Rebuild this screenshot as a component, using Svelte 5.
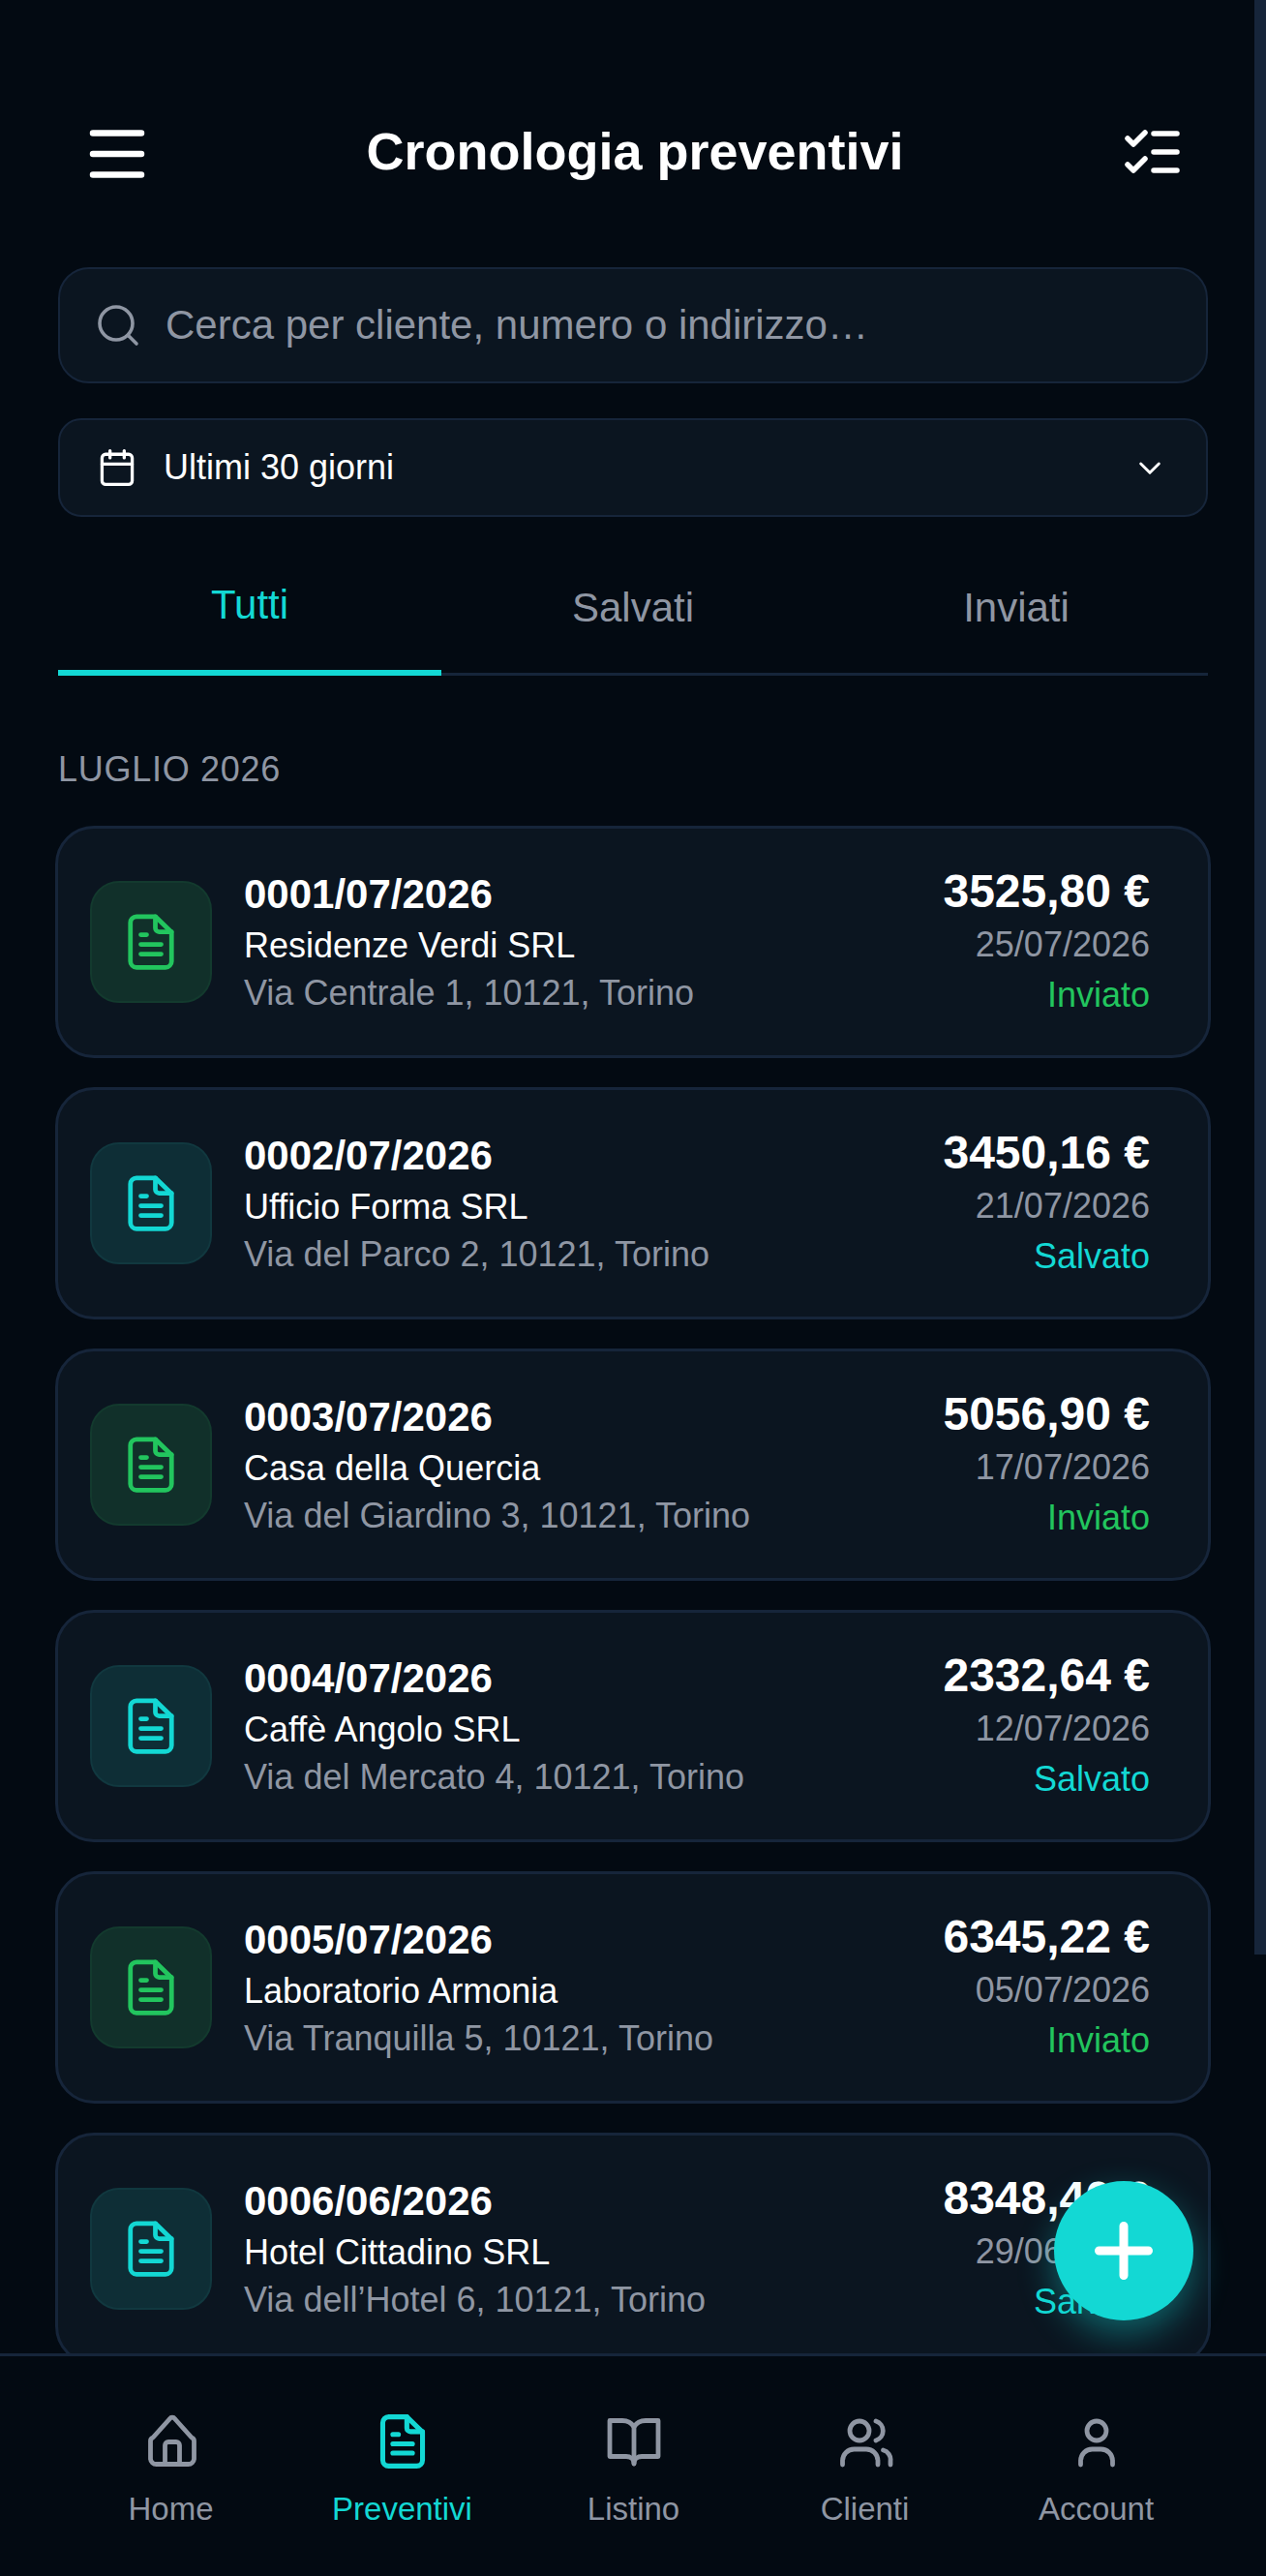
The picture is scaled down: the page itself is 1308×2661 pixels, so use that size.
<script>
  const quotes = [
    { num: '0001/07/2026', client: 'Residenze Verdi SRL', addr: 'Via Centrale 1, 10121, Torino', total: '3525,80 €', date: '25/07/2026', status: 'Inviato' },
    { num: '0002/07/2026', client: 'Ufficio Forma SRL', addr: 'Via del Parco 2, 10121, Torino', total: '3450,16 €', date: '21/07/2026', status: 'Salvato' },
    { num: '0003/07/2026', client: 'Casa della Quercia', addr: 'Via del Giardino 3, 10121, Torino', total: '5056,90 €', date: '17/07/2026', status: 'Inviato' },
    { num: '0004/07/2026', client: 'Caffè Angolo SRL', addr: 'Via del Mercato 4, 10121, Torino', total: '2332,64 €', date: '12/07/2026', status: 'Salvato' },
    { num: '0005/07/2026', client: 'Laboratorio Armonia', addr: 'Via Tranquilla 5, 10121, Torino', total: '6345,22 €', date: '05/07/2026', status: 'Inviato' },
    { num: '0006/06/2026', client: 'Hotel Cittadino SRL', addr: 'Via dell’Hotel 6, 10121, Torino', total: '8348,40 €', date: '29/06/2026', status: 'Salvato' }
  ];

  const tabs = ['Tutti', 'Salvati', 'Inviati'];
  const navItems = ['Home', 'Preventivi', 'Listino', 'Clienti', 'Account'];
</script>

{#snippet docIcon(size, weight)}
  <svg width={size} height={size} viewBox="0 0 24 24" fill="none" stroke="currentColor" stroke-width={weight} stroke-linecap="round" stroke-linejoin="round">
    <path d="M13.800 1.500H6A2.500 2.500 0 0 0 3.500 4V20A2.500 2.500 0 0 0 6 22.500H18A2.500 2.500 0 0 0 20.500 20V8L13.800 1.500z" />
    <path d="M13.800 1.500V6.300A1.500 1.500 0 0 0 15.300 7.800H20.500" />
    <path d="M7.800 9H10.200M7.800 13H16.200M7.800 17H16.200" />
  </svg>
{/snippet}

<div class="page">
  <div class="scrollbar"></div>

  <main class="content">
    <header class="topbar">
      <svg class="menu" width="58" height="58" viewBox="0 0 58 58" fill="none" stroke="#fff" stroke-width="6.500" stroke-linecap="round">
        <path d="M4 7.500H54M4 29H54M4 50.500H54" />
      </svg>
      <h1>Cronologia preventivi</h1>
      <svg width="58" height="50" viewBox="0 0 58 50" fill="none" stroke="#fff" stroke-width="5.500" stroke-linecap="round" stroke-linejoin="round">
        <path d="M3 12L9 18L21 6M3 39L9 45L21 33" />
        <path d="M30 7H54M30 26H54M30 45H54" />
      </svg>
    </header>

    <div class="search">
      <svg width="48" height="48" viewBox="0 0 24 24" fill="none" stroke="#8f96a3" stroke-width="1.800" stroke-linecap="round">
        <circle cx="11" cy="11" r="8.500" />
        <path d="M17.500 17.500L21.500 21.500" />
      </svg>
      <span>Cerca per cliente, numero o indirizzo…</span>
    </div>

    <div class="range">
      <svg width="44" height="44" viewBox="0 0 24 24" fill="none" stroke="#fff" stroke-width="1.800" stroke-linecap="round" stroke-linejoin="round">
        <rect x="3.500" y="4.500" width="17" height="17" rx="2" />
        <path d="M8 2.500V6.500M16 2.500V6.500M3.500 10H20.500" />
      </svg>
      <span>Ultimi 30 giorni</span>
      <svg class="chevron" width="32" height="32" viewBox="0 0 24 24" fill="none" stroke="#fff" stroke-width="2.200" stroke-linecap="round" stroke-linejoin="round">
        <path d="M5 9L12 16L19 9" />
      </svg>
    </div>

    <nav class="tabs">
      {#each tabs as tab, i}
        <div class="tab" class:active={i === 0}>{tab}</div>
      {/each}
    </nav>

    <h2>LUGLIO 2026</h2>

    <div class="list">
      {#each quotes as q}
        <article class="card">
          <div class="thumb" class:sent={q.status === 'Inviato'}>
            {@render docIcon(60, 1.9)}
          </div>
          <div class="info">
            <div class="num">{q.num}</div>
            <div class="client">{q.client}</div>
            <div class="addr">{q.addr}</div>
          </div>
          <div class="meta">
            <div class="total">{q.total}</div>
            <div class="date">{q.date}</div>
            <div class="status" class:sent={q.status === 'Inviato'}>{q.status}</div>
          </div>
        </article>
      {/each}
    </div>

    <button class="fab" aria-label="Nuovo preventivo">
      <svg width="60" height="60" viewBox="0 0 60 60" fill="none" stroke="#fff" stroke-width="9" stroke-linecap="round">
        <path d="M30 4.500V55.500M4.500 30H55.500" />
      </svg>
    </button>
  </main>

  <footer class="bottom-nav">
    {#each navItems as item, i}
      <div class="nav-item" class:active={i === 1}>
        {#if i === 0}
          <svg width="60" height="60" viewBox="0 0 60 60" fill="none" stroke="currentColor" stroke-width="4.800" stroke-linecap="round" stroke-linejoin="round">
            <path d="M28.500 6.500A3 3 0 0 1 33.500 6.500L51 26A4 4 0 0 1 53.500 30V48A6 6 0 0 1 47.500 53.500H14.500A6 6 0 0 1 8.500 48V30A4 4 0 0 1 11 26z" />
            <path d="M23.500 53.500V34A3.500 3.500 0 0 1 27 30.500H35A3.500 3.500 0 0 1 38.500 34V53.500" />
          </svg>
        {:else if i === 1}
          <div class="nav-doc">{@render docIcon(58, 2.1)}</div>
        {:else if i === 2}
          <svg width="60" height="60" viewBox="0 0 60 60" fill="none" stroke="currentColor" stroke-width="4.800" stroke-linecap="round" stroke-linejoin="round">
            <path d="M30 15C27 10 23 8.500 18 8.500H5V45.500H22C26 45.500 30 48 30 53C30 48 34 45.500 38 45.500H55V8.500H42C37 8.500 33 10 30 15z" />
            <path d="M30 15V53" />
          </svg>
        {:else if i === 3}
          <svg width="60" height="60" viewBox="0 0 60 60" fill="none" stroke="currentColor" stroke-width="4.800" stroke-linecap="round" stroke-linejoin="round">
            <circle cx="24" cy="19" r="10" />
            <path d="M6.500 54V50A12 12 0 0 1 18.500 38H31A12 12 0 0 1 43 50V54" />
            <path d="M41 9A10.500 10.500 0 0 1 41 29" />
            <path d="M48.500 39A10 10 0 0 1 56 50V54" />
          </svg>
        {:else}
          <svg width="60" height="60" viewBox="0 0 60 60" fill="none" stroke="currentColor" stroke-width="4.800" stroke-linecap="round" stroke-linejoin="round">
            <circle cx="30" cy="19" r="10" />
            <path d="M13.500 54V50A12 12 0 0 1 25.500 38H34.500A12 12 0 0 1 46.500 50V54" />
          </svg>
        {/if}
        <span>{item}</span>
      </div>
    {/each}
  </footer>
</div>

<style>
  :global(body) {
    margin: 0;
    background: #030a12;
  }

  .page {
    position: relative;
    width: 1308px;
    height: 2661px;
    display: flex;
    flex-direction: column;
    overflow: hidden;
    background: #030a12;
    color: #fff;
    font-family: "Liberation Sans", Arial, sans-serif;
  }

  .scrollbar {
    position: absolute;
    top: 0;
    right: 0;
    width: 12px;
    height: 2019px;
    background: #16253a;
  }

  .content {
    position: relative;
    flex: 1;
    min-height: 0;
    padding: 0 60px;
  }

  .topbar {
    display: flex;
    align-items: center;
    justify-content: space-between;
    height: 120px;
    padding: 96px 28px 0 32px;
    margin-bottom: 60px;
  }

  .menu {
    margin-top: 5px;
  }

  .topbar h1 {
    margin: 0;
    font-size: 54px;
    font-weight: 700;
  }

  .search {
    display: flex;
    align-items: center;
    gap: 25px;
    height: 120px;
    box-sizing: border-box;
    padding: 0 36px;
    margin-bottom: 36px;
    background: #0b1520;
    border: 2px solid #16253a;
    border-radius: 32px;
    color: #8f96a3;
    font-size: 42px;
  }

  .range {
    display: flex;
    align-items: center;
    gap: 26px;
    height: 102px;
    box-sizing: border-box;
    padding: 0 40px 0 37px;
    background: #0b1520;
    border: 2px solid #16253a;
    border-radius: 24px;
    font-size: 36px;
  }

  .chevron {
    margin-left: auto;
    margin-right: 2px;
  }

  .tabs {
    display: grid;
    grid-template-columns: repeat(3, 1fr);
    height: 164px;
    box-sizing: border-box;
    border-bottom: 3px solid #16253a;
  }

  .tab {
    display: flex;
    align-items: center;
    justify-content: center;
    padding-top: 26px;
    color: #8f96a3;
    font-size: 42px;
  }

  .tab.active {
    position: relative;
    padding-top: 20px;
    color: #13d8d4;
  }

  .tab.active::after {
    content: '';
    position: absolute;
    left: 0;
    right: 0;
    bottom: -3px;
    height: 6px;
    background: #13d8d4;
  }

  h2 {
    margin: 77px 0 38px;
    color: #8f96a3;
    font-size: 36px;
    font-weight: 400;
    letter-spacing: 0.72px;
    line-height: 40px;
  }

  .list {
    display: flex;
    flex-direction: column;
    gap: 30px;
    margin: 0 -3px;
  }

  .card {
    display: flex;
    align-items: center;
    gap: 33px;
    height: 240px;
    flex-shrink: 0;
    box-sizing: border-box;
    padding: 0 60px 0 33px;
    background: #0b1520;
    border: 3px solid #16253a;
    border-radius: 40px;
  }

  .thumb {
    display: flex;
    align-items: center;
    justify-content: center;
    width: 126px;
    height: 126px;
    flex-shrink: 0;
    box-sizing: border-box;
    background: #0e2e36;
    border: 2px solid #11383f;
    border-radius: 30px;
    color: #13d8d4;
  }

  .thumb.sent {
    background: #11302a;
    border-color: #133a2e;
    color: #22c55e;
  }

  .info {
    flex: 1;
    min-width: 0;
  }

  .num {
    font-size: 42px;
    font-weight: 700;
    line-height: 56px;
  }

  .client {
    font-size: 36px;
    line-height: 50px;
  }

  .addr {
    color: #8f96a3;
    font-size: 36px;
    line-height: 48px;
  }

  .meta {
    text-align: right;
  }

  .total {
    font-size: 48px;
    font-weight: 700;
    line-height: 56px;
  }

  .date {
    color: #8f96a3;
    font-size: 36px;
    line-height: 54px;
  }

  .status {
    color: #13d8d4;
    font-size: 36px;
    line-height: 50px;
  }

  .status.sent {
    color: #22c55e;
  }

  .fab {
    position: absolute;
    left: 1089px;
    top: 2253px;
    display: flex;
    align-items: center;
    justify-content: center;
    width: 144px;
    height: 144px;
    padding: 0;
    background: #13d8d4;
    border: none;
    border-radius: 50%;
    box-shadow: 0 14px 36px rgba(19, 216, 212, 0.4);
  }

  .bottom-nav {
    position: relative;
    display: grid;
    grid-template-columns: repeat(5, 239px);
    height: 230px;
    flex-shrink: 0;
    box-sizing: border-box;
    padding: 58px 0 0 57px;
    background: #030a12;
    border-top: 3px solid #16253a;
  }

  .nav-item {
    display: flex;
    flex-direction: column;
    align-items: center;
    gap: 21px;
    color: #8f96a3;
    font-size: 33px;
  }

  .nav-item.active {
    color: #13d8d4;
  }

  .nav-doc {
    display: flex;
    align-items: center;
    height: 60px;
  }
</style>
